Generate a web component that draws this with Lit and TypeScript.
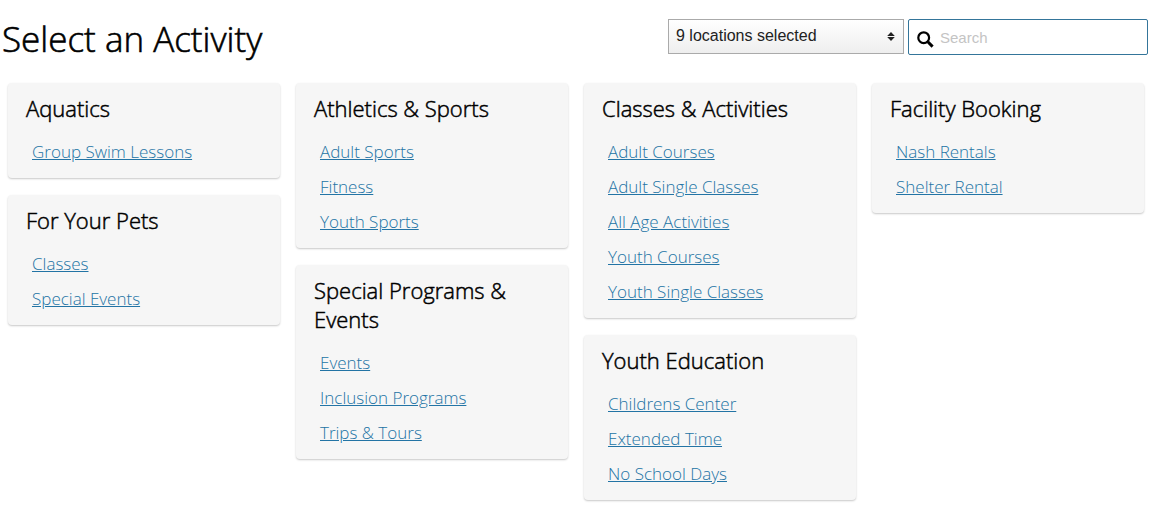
import { LitElement, html, css } from "lit";
import { customElement, property } from "lit/decorators.js";

interface Category { title: string; links: string[]; }

const columns: Category[][] = [
  [
    { title: "Aquatics", links: ["Group Swim Lessons"] },
    { title: "For Your Pets", links: ["Classes", "Special Events"] },
  ],
  [
    { title: "Athletics & Sports", links: ["Adult Sports", "Fitness", "Youth Sports"] },
    { title: "Special Programs & Events", links: ["Events", "Inclusion Programs", "Trips & Tours"] },
  ],
  [
    { title: "Classes & Activities", links: ["Adult Courses", "Adult Single Classes", "All Age Activities", "Youth Courses", "Youth Single Classes"] },
    { title: "Youth Education", links: ["Childrens Center", "Extended Time", "No School Days"] },
  ],
  [{ title: "Facility Booking", links: ["Nash Rentals", "Shelter Rental"] }],
];

@customElement("activity-card")
class ActivityCard extends LitElement {
  @property({ attribute: false }) category!: Category;

  static styles = css`
    :host { display: block; background: #f6f6f6; border-radius: 4px; box-shadow: 0 1px 2px rgba(0, 0, 0, 0.22); padding: 11px 18px 9px; }
    .title { margin: 0; font-size: 22px; line-height: 29px; font-weight: 300; color: #000; -webkit-text-stroke: 0.5px #000; }
    .list { list-style: none; margin: 11px 0 0; padding: 0 6px; }
    .item { height: 35px; line-height: 35px; }
    .link { color: #2374a5; font-size: 17px; font-weight: 300; text-decoration: underline; }
  `;

  render() {
    return html`
      <h2 class="title">${this.category.title}</h2>
      <ul class="list">
        ${this.category.links.map((l) => html`<li class="item"><a class="link" href="#">${l}</a></li>`)}
      </ul>
    `;
  }
}

@customElement("app-root")
class AppRoot extends LitElement {
  static styles = css`
    :host { display: block; font-family: "Open Sans", sans-serif; background: #fff; color: #000; }
    .header { display: flex; align-items: flex-start; justify-content: space-between; padding: 19px 11px 0 2px; }
    .heading { margin: 0; font-size: 35px; line-height: 40px; font-weight: 300; -webkit-text-stroke: 0.6px #000; }
    .filters { display: flex; gap: 4px; }
    .select { position: relative; width: 236px; }
    .select select { appearance: none; box-sizing: border-box; width: 100%; height: 35px; border: 1px solid #aaa; border-radius: 0; padding: 0 24px 3px 7px; margin: 0; background: linear-gradient(#fff, #eee); font: 16px "Liberation Sans", sans-serif; color: #222; }
    .arrows { position: absolute; right: 9px; top: 13px; pointer-events: none; }
    .search { display: flex; align-items: center; box-sizing: border-box; width: 240px; height: 36px; border: 1px solid #34759a; border-radius: 2px; padding: 0 8px; gap: 6px; }
    .glass { margin-top: 4px; }
    .search input { flex: 1; min-width: 0; border: 0; padding: 0; outline: 0; background: none; font: 15px "Liberation Sans", sans-serif; }
    .search input::placeholder { color: #c4c4c4; }
    .columns { display: grid; grid-template-columns: repeat(4, 1fr); gap: 16px; padding: 24px 15px 20px 8px; }
    .column { display: flex; flex-direction: column; gap: 17px; }
  `;

  render() {
    return html`
      <header class="header">
        <h1 class="heading">Select an Activity</h1>
        <div class="filters">
          <div class="select">
            <select aria-label="Locations"><option>9 locations selected</option></select>
            <svg class="arrows" width="8" height="9" viewBox="0 0 8 9"><path d="M4 0 7.8 4H.2zM4 9 .2 5h7.6z" fill="#222" /></svg>
          </div>
          <label class="search">
            <svg class="glass" width="17" height="17" viewBox="0 0 17 17" fill="none" stroke="#000"><circle cx="6.7" cy="6.7" r="5.4" stroke-width="2.2" /><path d="m10.8 10.8 4.8 4.8" stroke-width="3" /></svg>
            <input type="search" placeholder="Search" aria-label="Search" />
          </label>
        </div>
      </header>
      <main class="columns">
        ${columns.map((c) => html`<div class="column">${c.map((k) => html`<activity-card .category=${k}></activity-card>`)}</div>`)}
      </main>
    `;
  }
}
